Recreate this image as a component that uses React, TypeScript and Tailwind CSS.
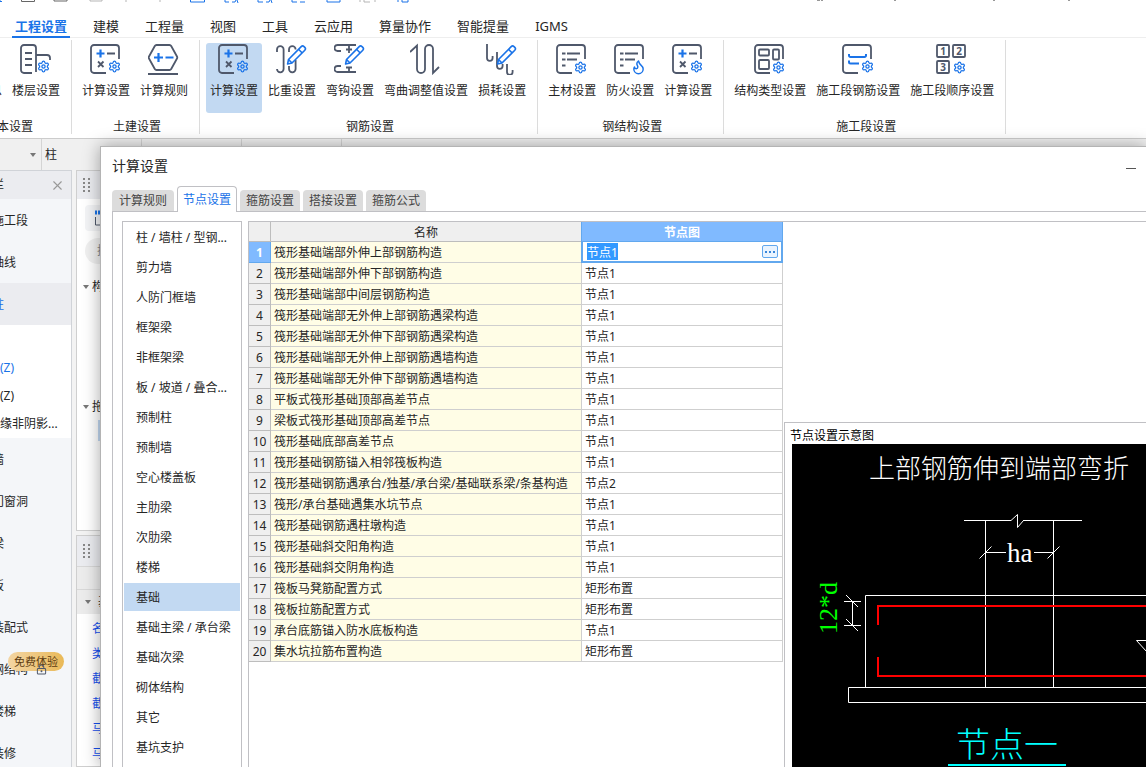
import React from "react";
import { Settings, X, Flame, LockKeyhole } from "lucide-react";

const DARK = "#4f586b";
const BLUE = "#1a73e8";

type IconProps = { children: React.ReactNode };

function Glyph({ children }: IconProps) {
  return (
    <svg
      className="block h-8 w-8"
      viewBox="1 0 32 32"
      fill="none"
      stroke={DARK}
      strokeWidth="1.8"
      aria-hidden="true"
    >
      {children}
    </svg>
  );
}

function Gear({ x = 19, y = 17 }: { x?: number; y?: number }) {
  return <Settings x={x} y={y} width={13} height={13} stroke={BLUE} strokeWidth={2.4} />;
}

function Pencil() {
  return (
    <g stroke={BLUE} strokeWidth="1.6" strokeLinejoin="round">
      <path d="M13.5 16.5 26.2 3.6a2 2 0 0 1 2.8 0l.8.8a2 2 0 0 1 0 2.8L17 20l-4.4 1z" />
      <path d="m23.5 6.3 3.7 3.7M13.5 16.5 17 20" />
    </g>
  );
}

const Frame = () => <path d="M17 30H5a3 3 0 0 1-3-3V5a3 3 0 0 1 3-3h22a3 3 0 0 1 3 3v11" />;

const FloorIcon = () => (
  <Glyph>
    <path d="M13 30H5a3 3 0 0 1-3-3V5a3 3 0 0 1 3-3h9a3 3 0 0 1 3 3v24M17 12h11a3 3 0 0 1 3 3v2M6 10h7M6 16h7M6 22h7" />
    <Gear x={18} y={17} />
  </Glyph>
);

const CalcIcon = () => (
  <Glyph>
    <Frame />
    <path d="M18 10.500h8M9 18.500l5.500 5.500m0-5.500L9 24" />
    <path d="M7.500 10.500h8M11.500 6.500v8" stroke={BLUE} strokeWidth="2.200" />
    <Gear />
  </Glyph>
);

const RuleIcon = () => (
  <Glyph>
    <path d="M9.500 2h13a2 2 0 0 1 1.700 1l5.800 10.500a2 2 0 0 1 0 2L24.200 26a2 2 0 0 1-1.700 1h-13a2 2 0 0 1-1.700-1L2 15.500a2 2 0 0 1 0-2L7.800 3a2 2 0 0 1 1.700-1zM1 31h30" />
    <path d="M7 14.500h9M11.500 10v9M18.500 14.500h8" stroke={BLUE} strokeWidth="2.200" />
  </Glyph>
);

const RatioIcon = () => (
  <Glyph>
    <path d="M2 9V6.500a3.300 3.300 0 0 1 6.600 0V26a3.300 3.300 0 0 1-6.600 0M14 9V6.500a3.300 3.300 0 0 1 6.600 0M20.600 17v9a3.300 3.300 0 0 1-6.600 0v-3" />
    <Pencil />
  </Glyph>
);

const HookIcon = () => (
  <Glyph>
    <path d="M23 2H4.500a2.800 2.800 0 0 0 0 6H8M23 29H4.500a2.800 2.800 0 0 1 0-6H8M16 2v8M13 6.500h6M16 29v-5M13 24.500h6" />
    <Pencil />
  </Glyph>
);

const BendIcon = () => (
  <Glyph>
    <path d="M1 9 8 2.500V26a4 4 0 0 0 8 0V6a4 4 0 0 1 8 0v24l6-6" />
  </Glyph>
);

const LossIcon = () => (
  <Glyph>
    <path d="M2 1v14a2.800 2.800 0 0 0 5.600 0v-2M12 9v14a2.800 2.800 0 0 0 5.600 0v-2M22 21v8a2.800 2.800 0 0 0 5.600 0v-2" />
    <Pencil />
  </Glyph>
);

const ListRows = () => <path d="M7 10.500h3.500M12 10.500h13M7 16.500h3.500M12 16.500h10M7 22.500h3.500" />;

const MaterialIcon = () => (
  <Glyph>
    <Frame />
    <ListRows />
    <Gear y={18} />
  </Glyph>
);

const FireIcon = () => (
  <Glyph>
    <Frame />
    <ListRows />
    <Flame x={17.500} y={16} width={16} height={16} stroke={BLUE} strokeWidth={2.200} />
  </Glyph>
);

const StructIcon = () => (
  <Glyph>
    <Frame />
    <rect x="6" y="6.500" width="10" height="6" rx="1" />
    <rect x="20" y="6.500" width="6" height="10" rx="1" />
    <rect x="6" y="17" width="10" height="9" rx="1" />
    <Gear y={18} />
  </Glyph>
);

const SectionRebarIcon = () => (
  <Glyph>
    <Frame />
    <path d="M8 11v1.500a1.500 1.500 0 0 0 1.500 1.500h14a1.500 1.500 0 0 0 1.500-1.500V11M8 17.500V19a1.500 1.500 0 0 0 1.500 1.500H18" stroke={BLUE} strokeWidth="2" />
    <Gear x={20} />
  </Glyph>
);

const OrderIcon = () => (
  <Glyph>
    <rect x="2" y="2" width="12" height="12" rx="1" />
    <rect x="18" y="2" width="12" height="12" rx="1" />
    <rect x="2" y="18" width="12" height="12" rx="1" />
    <g fill={DARK} stroke="none" fontSize="10" fontWeight="700" textAnchor="middle">
      <text x="8" y="11.600">1</text>
      <text x="24" y="11.600">2</text>
      <text x="8" y="27.600">3</text>
    </g>
    <Gear x={18} y={18} />
  </Glyph>
);

const menus = ["工程设置", "建模", "工程量", "视图", "工具", "云应用", "算量协作", "智能提量", "IGMS"];

type Tool = { label: string; icon: React.ReactNode; active?: boolean };

const groups: { title: string; tools: Tool[] }[] = [
  { title: "基本设置", tools: [{ label: "工程信息", icon: <MaterialIcon /> }, { label: "楼层设置", icon: <FloorIcon /> }] },
  { title: "土建设置", tools: [{ label: "计算设置", icon: <CalcIcon /> }, { label: "计算规则", icon: <RuleIcon /> }] },
  {
    title: "钢筋设置",
    tools: [
      { label: "计算设置", icon: <CalcIcon />, active: true },
      { label: "比重设置", icon: <RatioIcon /> },
      { label: "弯钩设置", icon: <HookIcon /> },
      { label: "弯曲调整值设置", icon: <BendIcon /> },
      { label: "损耗设置", icon: <LossIcon /> },
    ],
  },
  {
    title: "钢结构设置",
    tools: [
      { label: "主材设置", icon: <MaterialIcon /> },
      { label: "防火设置", icon: <FireIcon /> },
      { label: "计算设置", icon: <CalcIcon /> },
    ],
  },
  {
    title: "施工段设置",
    tools: [
      { label: "结构类型设置", icon: <StructIcon /> },
      { label: "施工段钢筋设置", icon: <SectionRebarIcon /> },
      { label: "施工段顺序设置", icon: <OrderIcon /> },
    ],
  },
];

const dialogTabs = ["计算规则", "节点设置", "箍筋设置", "搭接设置", "箍筋公式"];

const categories = [
  "柱 / 墙柱 / 型钢...", "剪力墙", "人防门框墙", "框架梁", "非框架梁", "板 / 坡道 / 叠合...",
  "预制柱", "预制墙", "空心楼盖板", "主肋梁", "次肋梁", "楼梯", "基础", "基础主梁 / 承台梁",
  "基础次梁", "砌体结构", "其它", "基坑支护",
];

const rows: [string, string][] = [
  ["筏形基础端部外伸上部钢筋构造", "节点1"],
  ["筏形基础端部外伸下部钢筋构造", "节点1"],
  ["筏形基础端部中间层钢筋构造", "节点1"],
  ["筏形基础端部无外伸上部钢筋遇梁构造", "节点1"],
  ["筏形基础端部无外伸下部钢筋遇梁构造", "节点1"],
  ["筏形基础端部无外伸上部钢筋遇墙构造", "节点1"],
  ["筏形基础端部无外伸下部钢筋遇墙构造", "节点1"],
  ["平板式筏形基础顶部高差节点", "节点1"],
  ["梁板式筏形基础顶部高差节点", "节点1"],
  ["筏形基础底部高差节点", "节点1"],
  ["筏形基础钢筋锚入相邻筏板构造", "节点1"],
  ["筏形基础钢筋遇承台/独基/承台梁/基础联系梁/条基构造", "节点2"],
  ["筏形/承台基础遇集水坑节点", "节点1"],
  ["筏形基础钢筋遇柱墩构造", "节点1"],
  ["筏形基础斜交阳角构造", "节点1"],
  ["筏形基础斜交阴角构造", "节点1"],
  ["筏板马凳筋配置方式", "矩形布置"],
  ["筏板拉筋配置方式", "矩形布置"],
  ["承台底筋锚入防水底板构造", "节点1"],
  ["集水坑拉筋布置构造", "矩形布置"],
];

function QuickAccess() {
  return (
    <svg className="block h-3.5 w-full" fill="none" aria-hidden="true">
      <path d="M0 0v1.500h2M190.500 0v2h14V0M225 0v2h4M232 2h3l1-2m1 0 1 3M258 0v2h5M266 2h3l1-2m1 0 1 3M292 0v2h5M300 2h5M327 0v2h13V0M398 0v2M402 0v2h6V0" stroke={BLUE} />
      <path d="M21.500 0v1.500h13V0M54 0v1h13V0" stroke="#666" />
      <path d="M90 0v1h12V0M126 0v2M160 0v2M360 0v2M364 0v2h6M375 0v2" stroke="#b5b5b5" />
      <path d="M817 0h3M822 0v1M895 0v1M994 0v1M1069 0v1" stroke="#333" />
    </svg>
  );
}

function Ribbon() {
  return (
    <header className="shrink-0 overflow-hidden bg-white">
      <QuickAccess />
      <nav className="flex h-6 gap-[26px] border-b border-[#eeeeee] pl-[15px] text-[13px] leading-6">
        {menus.map((m, i) => (
          <button
            key={m}
            className={
              i === 0
                ? "-mx-[3px] h-6 shrink-0 border-b-2 border-[#1a73e8] px-[3px] font-bold text-[#1a73e8]"
                : "h-6 shrink-0 border-b-2 border-transparent"
            }
          >
            {m}
          </button>
        ))}
      </nav>
      <div className="-ml-14 flex h-[101px] border-b border-[#cccccc] pt-0.5">
        {groups.map((g) => (
          <section key={g.title} className="flex h-[94px] shrink-0 flex-col justify-between border-r border-[#dcdcdc] pt-[3px] pr-[7px] pl-1.5">
            <div className="flex gap-0.5">
              {g.tools.map((t) => (
                <button
                  key={t.label}
                  className={
                    t.active
                      ? "flex h-[70px] flex-col items-center gap-[7px] rounded-[3px] bg-[#c2d9f2] px-1"
                      : "flex h-[70px] flex-col items-center gap-[7px] rounded-[3px] px-1"
                  }
                >
                  {t.icon}
                  <span className="leading-[18px]">{t.label}</span>
                </button>
              ))}
            </div>
            <h2 className="h-4 pl-1 text-center leading-[18px]">{g.title}</h2>
          </section>
        ))}
      </div>
    </header>
  );
}

function Grip({ rows: n }: { rows: number }) {
  return (
    <span className="grid grid-cols-2 gap-x-[3px] gap-y-0.5">
      {Array.from({ length: n * 2 }, (_, i) => (
        <i key={i} className="h-0.5 w-0.5 bg-[#888888]" />
      ))}
    </span>
  );
}

function Caret() {
  return (
    <svg className="h-1 w-1.5 shrink-0" viewBox="0 0 6 4" aria-hidden="true">
      <path d="M0 0h6L3 4z" fill="#777" />
    </svg>
  );
}

function NavItem({ label, active }: { label: string; active?: boolean }) {
  return (
    <a
      href="#"
      className={
        active
          ? "flex h-[42px] shrink-0 items-center bg-[#ebecf0] pt-0.5 text-[#1a73e8]"
          : "flex h-[42px] shrink-0 items-center pt-0.5"
      }
    >
      <span className="-ml-2 whitespace-nowrap">{label}</span>
    </a>
  );
}

function SideNav() {
  return (
    <aside className="flex w-[72px] shrink-0 flex-col overflow-hidden border-t border-r border-[#d0d3d8] bg-[#f4f6f9]">
      <div className="flex h-7 shrink-0 items-center justify-between bg-[#ebecf0] pr-1.5">
        <span className="-ml-2">栏</span>
        <button aria-label="关闭">
          <X size={15} color="#999" strokeWidth={1.800} />
        </button>
      </div>
      <NavItem label="施工段" />
      <NavItem label="轴线" />
      <NavItem label="柱" active />
      <div className="flex shrink-0 flex-col bg-white pt-[29px] leading-7">
        <a href="#" className="-ml-3 whitespace-nowrap text-[#1a73e8]">柱(Z)</a>
        <a href="#" className="-ml-3 whitespace-nowrap">柱(Z)</a>
        <a href="#" className="-ml-3 whitespace-nowrap">边缘非阴影...</a>
      </div>
      <NavItem label="墙" />
      <NavItem label="门窗洞" />
      <NavItem label="梁" />
      <NavItem label="板" />
      <NavItem label="装配式" />
      <div className="relative shrink-0">
        <NavItem label="钢结构" />
        <span className="absolute top-1 left-2 rounded-full bg-linear-to-r from-[#f3d5a2] to-[#e9b957] px-[6px] text-[11px] leading-[19px] whitespace-nowrap text-[#5c3b10]">
          免费体验
        </span>
        <LockKeyhole className="absolute top-4 left-9" size={11} color="#4f586b" strokeWidth={2.200} />
      </div>
      <NavItem label="楼梯" />
      <NavItem label="装修" />
    </aside>
  );
}

function ComponentPanels() {
  return (
    <div className="flex min-w-0 flex-1 flex-col gap-1">
      <section className="h-[361px] shrink-0 border border-[#cfcfcf] bg-white">
        <div className="flex h-7 items-center bg-[#ebecf0] pl-1.5">
          <Grip rows={4} />
        </div>
        <div className="flex flex-col gap-[7px] pt-1.5 pl-2">
          <button aria-label="新建" className="flex h-[26px] w-20 items-center rounded bg-[#f3f4f6] pl-2.5">
            <svg className="h-4 w-4" viewBox="0 0 16 16" fill="none" aria-hidden="true">
              <path d="M0 2.500h12" stroke={BLUE} strokeWidth="4" strokeDasharray="2 1" />
              <path d="M.5 7v8H12" stroke="#4f586b" />
            </svg>
          </button>
          <button className="h-[26px] w-40 rounded-full bg-[#f0f0f0] pl-3 text-left text-[#888888]">搜索</button>
        </div>
        <div className="flex h-[46px] items-center gap-[3px] pl-1.5"><Caret />构件</div>
        <div className="mt-[84px] flex h-[26px] items-center gap-[3px] pl-1.5"><Caret />拖拽</div>
        <div className="ml-[21px] h-[21px] bg-[#c2d9f2]" />
      </section>
      <section className="flex-1 border border-[#cfcfcf] bg-white">
        <div className="flex h-[30px] items-center bg-[#ebecf0] pl-1.5">
          <Grip rows={4} />
        </div>
        <div className="h-6 border-y border-[#d8d8d8] bg-[#ececec]" />
        <div className="flex h-6 items-center gap-[7px] bg-[#ececec] pl-2"><Caret />基本</div>
        <div className="flex flex-col pt-0.5 pl-[15px] leading-[25px] whitespace-nowrap text-[#1450f0]">
          {["名称", "类别", "截面", "截面", "马凳", "马凳"].map((p, i) => (
            <span key={i}>{p}</span>
          ))}
        </div>
      </section>
    </div>
  );
}

function NodeTable() {
  return (
    <table className="w-[534px] shrink-0 table-fixed border-separate border-spacing-0 self-start">
      <colgroup>
        <col className="w-[22px]" />
        <col className="w-[310px]" />
        <col className="w-[202px]" />
      </colgroup>
      <thead>
        <tr className="h-5">
          <th className="border-r border-b border-[#bdbdbd] bg-[#efefef] p-0" aria-label="序号" />
          <th className="border-b border-[#bdbdbd] bg-[#efefef] px-0 pt-0.5 pb-0 leading-[17px] font-normal">名称</th>
          <th className="border border-t-0 border-[#62a8ee] bg-[#80baff] px-0 pt-0.5 pb-0 leading-[17px] font-bold text-white">节点图</th>
        </tr>
      </thead>
      <tbody>
        {rows.map(([name, node], i) => (
          <tr key={name} className="h-[21px]">
            <td
              className={
                i === 0
                  ? "border-r border-b border-[#62a8ee] bg-[#80baff] px-0 pt-0.5 pb-0 text-center leading-[18px] font-bold text-white"
                  : "border-r border-b border-[#bdbdbd] bg-[#efefef] px-0 pt-0.5 pb-0 text-center leading-[18px]"
              }
            >
              {i + 1}
            </td>
            <td className="border-b border-[#cfcfcf] bg-[#fffde6] pt-0.5 pr-0 pb-0 pl-[3px] leading-[18px] whitespace-nowrap">{name}</td>
            {i === 0 ? (
              <td className="border-2 border-t-0 border-[#62a8ee] bg-white p-0">
                <div className="flex h-[19px] items-center justify-between pr-[3px] pl-1">
                  <input aria-label="节点图" defaultValue={node} className="h-[17px] w-[31px] bg-[#3399ff] pt-px text-white outline-none" />
                  <button aria-label="选择节点图" className="flex h-[13px] w-4 items-center justify-center gap-0.5 rounded-[2px] border border-[#62a8ee] bg-[#eaf4ff]">
                    <i className="h-0.5 w-0.5 bg-[#3a86d8]" />
                    <i className="h-0.5 w-0.5 bg-[#3a86d8]" />
                    <i className="h-0.5 w-0.5 bg-[#3a86d8]" />
                  </button>
                </div>
              </td>
            ) : (
              <td className="border-r border-b border-l border-[#cfcfcf] bg-white pt-0.5 pr-0 pb-0 pl-[3px] leading-[18px]">{node}</td>
            )}
          </tr>
        ))}
      </tbody>
    </table>
  );
}

function NodeDiagram() {
  return (
    <svg className="block h-full min-h-[323px] w-full" fill="none" stroke="#fff" strokeWidth="1" role="img" aria-label="节点一">
      <path d="M172 76.500h47M231 76.500h59M219 76.500l6.500-6v13l6-7M193.500 76.500v167M261.500 76.500v167" />
      <path d="M193.500 108.500H214M242 108.500h19.500M187.500 114.500l12-12M255.500 114.500l12-12" />
      <path d="M60.500 157.500v24M52 157.500h17M52 181.500h17M54 151l12 12M54 175l12 12" />
      <path d="M600 151.500H73.500v92M600 243.500H56.500v15H600M600 196.500H344.500l10 11" />
      <path d="M600 162H86v19M600 232H86v-19" stroke="#f00" strokeWidth="2" />
      <path d="M156 321h118" stroke="#0ff" strokeWidth="2" />
      <g stroke="none" fill="#fff" fontSize="26">
        <text x="77" y="34" fontWeight="300">上部钢筋伸到端部弯折</text>
        <text x="215" y="118" fontSize="27" className="font-['Liberation_Serif',serif]">ha</text>
        <text transform="translate(45 190) rotate(-90)" fill="#0f0" className="font-['Liberation_Serif',serif]">12*d</text>
        <text x="164" y="313" fontSize="34" fill="#0ff" fontWeight="300">节点一</text>
      </g>
    </svg>
  );
}

function SettingsDialog() {
  return (
    <div
      role="dialog"
      aria-label="计算设置"
      className="absolute inset-0 top-[146px] left-[100px] flex flex-col border-t border-l border-[#b4b4b4] bg-white pl-[11px] shadow-[0_0_16px_rgba(0,0,0,0.35)]"
    >
      <div className="flex h-[39px] shrink-0 items-center justify-between pr-2.5 pb-0.5">
        <h1 className="text-[14px] leading-5">计算设置</h1>
        <button aria-label="最小化" className="flex h-5 w-2.5 items-center">
          <i className="mt-1.5 h-px w-full bg-[#555555]" />
        </button>
      </div>
      <div role="tablist" className="flex h-[26px] shrink-0 items-end gap-[3px] border-b border-[#c0c0c4]">
        {dialogTabs.map((t, i) => (
          <button
            key={t}
            role="tab"
            aria-selected={i === 1}
            className={
              i === 1
                ? "-mb-px h-[26px] rounded-t border border-b-0 border-[#c0c0c4] bg-white px-[5px] pt-px text-[#1a73e8]"
                : i === 0
                  ? "h-[21px] rounded-t bg-[#dcdcdc] px-[7px] pt-px text-[#444444]"
                  : "h-[21px] rounded-t bg-[#dcdcdc] px-1.5 pt-px text-[#444444]"
            }
          >
            {t}
          </button>
        ))}
      </div>
      <div className="flex min-h-0 flex-1 gap-1.5 overflow-hidden border-l border-[#c0c0c4] pt-[9px] pl-[9px]">
        <ul className="flex w-[120px] shrink-0 flex-col gap-0.5 overflow-hidden border border-b-0 border-[#c0c0c4] p-px">
          {categories.map((c) => (
            <li key={c} className="shrink-0">
              <button
                className={
                  c === "基础"
                    ? "h-7 w-full bg-[#c2d9f2] pt-0.5 pl-3 text-left whitespace-nowrap"
                    : "h-7 w-full pt-0.5 pl-3 text-left whitespace-nowrap"
                }
              >
                {c}
              </button>
            </li>
          ))}
        </ul>
        <div className="flex min-w-0 flex-1 gap-px border-t border-l border-[#c0c0c4]">
          <NodeTable />
          <section className="mt-[200px] flex min-w-0 flex-1 flex-col border-t border-l border-[#c0c0c4] bg-white">
            <h2 className="h-[21px] shrink-0 pl-[5px] leading-[26px] text-black">节点设置示意图</h2>
            <div className="ml-[7px] min-h-0 flex-1 overflow-hidden bg-black">
              <NodeDiagram />
            </div>
          </section>
        </div>
      </div>
    </div>
  );
}

export default function App() {
  return (
    <div className="relative flex h-screen flex-col overflow-hidden bg-[#f3f3f3] font-['Noto_Sans','Noto_Sans_CJK_SC',sans-serif] text-[12px] leading-4 text-[#262626]">
      <Ribbon />
      <div className="flex h-[31px] shrink-0 bg-[#f0f0f0]">
        <div className="flex w-[42px] items-center justify-end border-r border-[#d4d4d4] pr-[5px]"><Caret /></div>
        <div className="flex w-[100px] items-center border-r border-[#d4d4d4] pl-[3px]">柱</div>
        <div className="w-[100px] border-r border-[#d4d4d4]" />
        <div className="w-[100px] border-r border-[#d4d4d4]" />
      </div>
      <main className="flex min-h-0 flex-1 gap-1">
        <SideNav />
        <ComponentPanels />
      </main>
      <SettingsDialog />
    </div>
  );
}
